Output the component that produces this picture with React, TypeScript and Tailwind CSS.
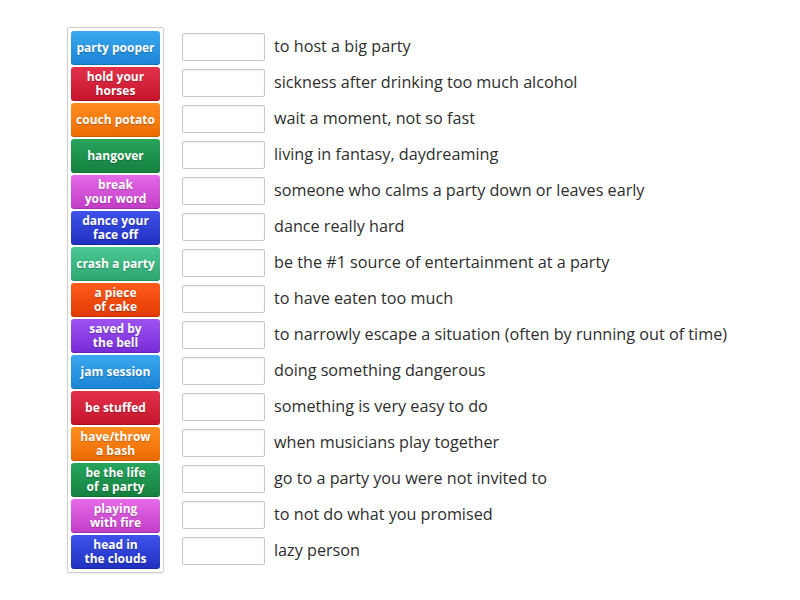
const tiles: { lines: string[]; cls: string }[] = [
  { lines: ["party pooper"], cls: "bg-gradient-to-b from-[#3aa9f0] to-[#1a83d5]" },
  { lines: ["hold your", "horses"], cls: "bg-gradient-to-b from-[#e3304a] to-[#c3142c]" },
  { lines: ["couch potato"], cls: "bg-gradient-to-b from-[#ff8d1e] to-[#ec6b00]" },
  { lines: ["hangover"], cls: "bg-gradient-to-b from-[#27a55d] to-[#15803f]" },
  { lines: ["break", "your word"], cls: "bg-gradient-to-b from-[#e56ae8] to-[#c23bc6]" },
  { lines: ["dance your", "face off"], cls: "bg-gradient-to-b from-[#3f52ea] to-[#2030c0]" },
  { lines: ["crash a party"], cls: "bg-gradient-to-b from-[#4bc893] to-[#2ea672]" },
  { lines: ["a piece", "of cake"], cls: "bg-gradient-to-b from-[#ff5c1c] to-[#e03a00]" },
  { lines: ["saved by", "the bell"], cls: "bg-gradient-to-b from-[#9e52f2] to-[#762ad6]" },
  { lines: ["jam session"], cls: "bg-gradient-to-b from-[#3aa9f0] to-[#1a83d5]" },
  { lines: ["be stuffed"], cls: "bg-gradient-to-b from-[#e3304a] to-[#c3142c]" },
  { lines: ["have/throw", "a bash"], cls: "bg-gradient-to-b from-[#ff8d1e] to-[#ec6b00]" },
  { lines: ["be the life", "of a party"], cls: "bg-gradient-to-b from-[#27a55d] to-[#15803f]" },
  { lines: ["playing", "with fire"], cls: "bg-gradient-to-b from-[#e56ae8] to-[#c23bc6]" },
  { lines: ["head in", "the clouds"], cls: "bg-gradient-to-b from-[#3f52ea] to-[#2030c0]" },
];

const definitions = [
  "to host a big party",
  "sickness after drinking too much alcohol",
  "wait a moment, not so fast",
  "living in fantasy, daydreaming",
  "someone who calms a party down or leaves early",
  "dance really hard",
  "be the #1 source of entertainment at a party",
  "to have eaten too much",
  "to narrowly escape a situation (often by running out of time)",
  "doing something dangerous",
  "something is very easy to do",
  "when musicians play together",
  "go to a party you were not invited to",
  "to not do what you promised",
  "lazy person",
];

export default function App() {
  return (
    <div className="w-[800px] h-[600px] bg-white font-['Open_Sans',sans-serif] flex items-start pl-[67px] pt-[27px]">
      <div className="w-[97px] border border-[#cfcfcf] rounded-[2px] p-[3px] flex flex-col gap-[2px] shadow-[0_1px_2px_rgba(0,0,0,0.08)]">
        {tiles.map((t) => (
          <div
            key={t.lines.join(" ")}
            className={`${t.cls} h-[34px] rounded-[3px] flex flex-col items-center justify-center text-center text-white font-bold text-[12px] leading-[14px] [text-shadow:0_1px_1px_rgba(0,0,0,0.25)] shadow-[inset_0_-1px_0_rgba(0,0,0,0.15)]`}
          >
            {t.lines.map((l) => (
              <span key={l} className="block h-[14px] whitespace-nowrap">{l}</span>
            ))}
          </div>
        ))}
      </div>
      <div className="flex flex-col gap-[2px] pt-[3px] ml-[18px]">
        {definitions.map((d) => (
          <div key={d} className="h-[34px] flex items-center gap-[9px]">
            <div className="w-[83px] h-[28px] bg-white border border-[#c8c8c8] rounded-[2px] shadow-[inset_0_1px_2px_rgba(0,0,0,0.06)]" />
            <span className="text-[16.2px] leading-[20px] pb-[3px] text-[#2e2e2e] whitespace-nowrap">{d}</span>
          </div>
        ))}
      </div>
    </div>
  );
}
